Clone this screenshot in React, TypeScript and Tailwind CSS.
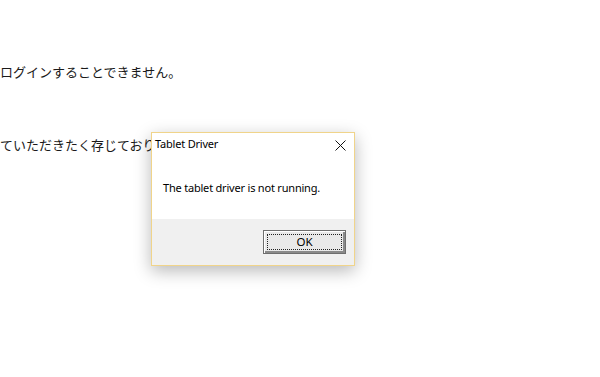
const App = () => {
  return (
    <div className="relative w-[600px] h-[377px] overflow-hidden bg-white">
      {/* page text behind the dialog */}
      <div
        className="pt-[62px] text-[13px] leading-[20px] text-[#1a1a1a] whitespace-nowrap"
        style={{ fontFamily: '"Noto Sans CJK JP", "Noto Sans", sans-serif' }}
      >
        <p>ログインすることできません。</p>
        <p className="mt-[53px]">ていただきたく存じており</p>
      </div>

      {/* message box */}
      <div
        className="absolute left-[151px] top-[132px] w-[204px] h-[134px] flex flex-col bg-white border border-[#f0d48a] shadow-[0_5px_16px_rgba(0,0,0,0.28)]"
        style={{ fontFamily: '"Segoe UI", "Noto Sans", sans-serif' }}
      >
        <div className="flex items-center justify-between h-[22px] pl-[3px] pr-[8px]">
          <span className="text-[11px] tracking-[-0.2px] text-black">Tablet Driver</span>
          <svg width="11" height="11" viewBox="0 0 11 11" className="mt-[2px]">
            <path d="M0.5 0.5 L10.5 10.5 M10.5 0.5 L0.5 10.5" stroke="#111" strokeWidth="1" />
          </svg>
        </div>
        <div className="flex-1 flex items-center pl-[11px] pt-[2px]">
          <span className="text-[11px] tracking-[-0.2px] text-black">The tablet driver is not running.</span>
        </div>
        <div className="h-[46px] bg-[#f0f0f0] flex justify-end items-start pt-[11px] pr-[8px]">
          <button className="w-[83px] h-[24px] border border-[#6e6e6e] bg-[#e9e9e9] shadow-[inset_1px_1px_0_#ffffff,inset_-2px_-2px_0_#8a8a8a] p-[3px] flex">
            <span className="flex-1 flex items-center justify-center border border-dotted border-[#222] text-[11.5px] text-black">
              OK
            </span>
          </button>
        </div>
      </div>
    </div>
  );
};

export default App;
